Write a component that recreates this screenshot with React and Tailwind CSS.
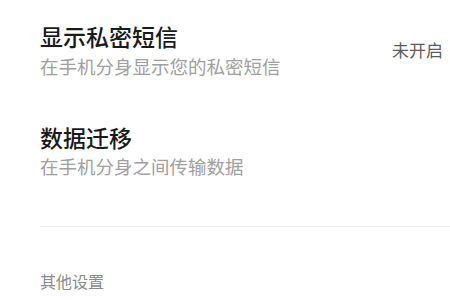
export default function App() {
  const font = { fontFamily: '"Noto Sans CJK SC", "Noto Sans", sans-serif' };
  return (
    <div className="w-[450px] h-[300px] bg-white overflow-hidden" style={font}>
      <div className="pt-[21px] pl-[40px]">
        <div className="flex items-center justify-between pr-[7px]">
          <div className="flex flex-col">
            <div className="text-[23px] leading-[30px] font-medium text-[#1a1a1a]">显示私密短信</div>
            <div className="mt-[2px] text-[18.5px] leading-[26px] text-[#a0a0a0]">在手机分身显示您的私密短信</div>
          </div>
          <div className="text-[17px] leading-[24px] text-[#5c5c5c]">未开启</div>
        </div>
        <div className="mt-[43px] flex flex-col">
          <div className="text-[23px] leading-[30px] font-medium text-[#1a1a1a]">数据迁移</div>
          <div className="mt-[1px] text-[18.5px] leading-[26px] text-[#a0a0a0]">在手机分身之间传输数据</div>
        </div>
        <div className="mt-[47px] h-px bg-[#ebebeb]" />
        <div className="mt-[43px] text-[16px] leading-[22px] text-[#8a8a8a]">其他设置</div>
      </div>
    </div>
  );
}
